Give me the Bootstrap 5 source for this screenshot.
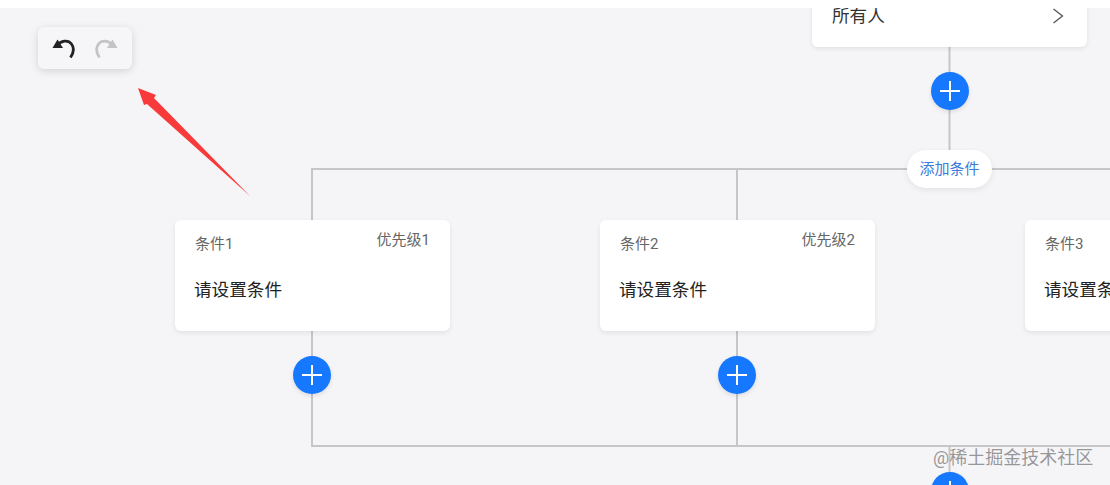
<!DOCTYPE html>
<html lang="zh">
<head>
  <meta charset="UTF-8">
  <meta name="viewport" content="width=device-width, initial-scale=1">
  <title>审批流程</title>
  <link href="https://cdn.jsdelivr.net/npm/bootstrap@5.3.2/dist/css/bootstrap.min.css" rel="stylesheet">
  <style>
    html, body { height: 100%; }
    body {
      background: #fff;
      overflow: hidden;
      font-family: Roboto, "Noto Sans CJK SC", sans-serif;
    }
    .flow-canvas {
      position: relative;
      width: 1110px;
      height: 477px;
      margin-top: 8px;
      background: #f5f5f8;
      overflow: hidden;
    }
    .flow-lines { position: absolute; left: 0; top: 0; }
    .undo-bar {
      position: absolute;
      left: 38px;
      top: 19px;
      width: 94px;
      height: 42px;
      background: #f6f6f8;
      border-radius: 6px;
      box-shadow: 0 2px 8px rgba(0, 0, 0, .14);
    }
    .flow-node {
      position: absolute;
      width: 275px;
      border: 0;
      border-radius: 6px;
      box-shadow: 0 2px 5px rgba(0, 0, 0, .08);
    }
    .node-cond { top: 212px; height: 111px; padding: 13px 20px 0; }
    .node-start { left: 812px; top: -8px; height: 47px; padding: 0 23px 16px 20px; border-radius: 0 0 6px 6px; }
    .node-title { font-size: 15px; line-height: 22px; color: #666; }
    .node-prio { font-size: 15px; line-height: 22px; color: #666; margin-top: -4px; }
    .node-text { font-size: 17.6px; line-height: 26px; color: #222; margin: 22px 0 0 -1px; }
    .start-text { font-size: 17.6px; line-height: 26px; color: #333; }
    .add-btn {
      position: absolute;
      width: 38px;
      height: 38px;
      padding: 0;
      border: 0;
      background: #1677ff;
      box-shadow: 0 2px 4px rgba(0, 0, 0, .1);
    }
    .add-cond {
      position: absolute;
      left: 907px;
      top: 142px;
      width: 85px;
      height: 38px;
      padding: 0;
      border: 0;
      font-size: 15px;
      color: #3a7bdc;
      background: #fff;
      border-radius: 19px;
      box-shadow: 0 2px 6px rgba(0, 0, 0, .08);
    }
    .water-mark {
      position: absolute;
      left: 933px;
      top: 437px;
      font-size: 18px;
      line-height: 26px;
      color: rgba(120, 120, 120, .75);
      white-space: nowrap;
    }
  </style>
</head>
<body>

<div class="flow-canvas">

  <!-- lines and red arrow -->
  <svg class="flow-lines" width="1110" height="477" viewBox="0 8 1110 477">
    <g fill="none" stroke="#c6c6c6" stroke-width="2">
      <path d="M949.5 47V169"/>
      <path d="M312 220V169H1110"/>
      <path d="M737 169V220"/>
      <path d="M312 331V446H1110"/>
      <path d="M737 331V446"/>
      <path d="M949.5 446V485"/>
    </g>
    <polygon points="138,88 156,95 154,98 250,196 147,104 144,105" fill="#f93a3a"/>
  </svg>

  <!-- undo / redo -->
  <div class="undo-bar d-flex align-items-center justify-content-center gap-3">
    <svg width="26" height="26" viewBox="0 0 26 26">
      <path d="M6 10.5C10 5.500 17 4.500 20.500 9C23.500 13 22.500 18 19.500 22.500" fill="none" stroke="#222" stroke-width="2.800"/>
      <polygon points="1.500,13 6.500,4.500 12,13" fill="#222"/>
    </svg>
    <svg width="26" height="26" viewBox="0 0 26 26">
      <path d="M20 10.5C16 5.500 9 4.500 5.500 9C2.500 13 3.500 18 6.500 22.500" fill="none" stroke="#c4c4c4" stroke-width="2.800"/>
      <polygon points="24.500,13 19.500,4.500 14,13" fill="#c4c4c4"/>
    </svg>
  </div>

  <!-- start node -->
  <div class="card flow-node node-start d-flex flex-row align-items-center justify-content-between">
    <span class="start-text">所有人</span>
    <svg width="12" height="16" viewBox="0 0 12 16">
      <path d="M1.500 1L10.500 8L1.500 15" fill="none" stroke="#555" stroke-width="1.300"/>
    </svg>
  </div>

  <button class="btn rounded-circle add-btn d-flex align-items-center justify-content-center" style="left:931px;top:64px">
    <svg width="20" height="20" viewBox="0 0 20 20"><path d="M10 0V20M0 10H20" stroke="#fff" stroke-width="2"/></svg>
  </button>

  <button class="btn add-cond">添加条件</button>

  <!-- condition nodes -->
  <div class="card flow-node node-cond" style="left:175px">
    <div class="d-flex justify-content-between">
      <span class="node-title">条件1</span>
      <span class="node-prio">优先级1</span>
    </div>
    <div class="node-text">请设置条件</div>
  </div>
  <div class="card flow-node node-cond" style="left:600px">
    <div class="d-flex justify-content-between">
      <span class="node-title">条件2</span>
      <span class="node-prio">优先级2</span>
    </div>
    <div class="node-text">请设置条件</div>
  </div>
  <div class="card flow-node node-cond" style="left:1025px">
    <div class="d-flex justify-content-between">
      <span class="node-title">条件3</span>
    </div>
    <div class="node-text text-nowrap">请设置条件</div>
  </div>

  <button class="btn rounded-circle add-btn d-flex align-items-center justify-content-center" style="left:293px;top:348px">
    <svg width="20" height="20" viewBox="0 0 20 20"><path d="M10 0V20M0 10H20" stroke="#fff" stroke-width="2"/></svg>
  </button>
  <button class="btn rounded-circle add-btn d-flex align-items-center justify-content-center" style="left:718px;top:348px">
    <svg width="20" height="20" viewBox="0 0 20 20"><path d="M10 0V20M0 10H20" stroke="#fff" stroke-width="2"/></svg>
  </button>
  <button class="btn rounded-circle add-btn d-flex align-items-center justify-content-center" style="left:931px;top:464px">
    <svg width="20" height="20" viewBox="0 0 20 20"><path d="M10 0V20M0 10H20" stroke="#fff" stroke-width="2"/></svg>
  </button>

  <div class="water-mark">@稀土掘金技术社区</div>
</div>

<script src="https://cdn.jsdelivr.net/npm/bootstrap@5.3.2/dist/js/bootstrap.bundle.min.js"></script>
</body>
</html>
